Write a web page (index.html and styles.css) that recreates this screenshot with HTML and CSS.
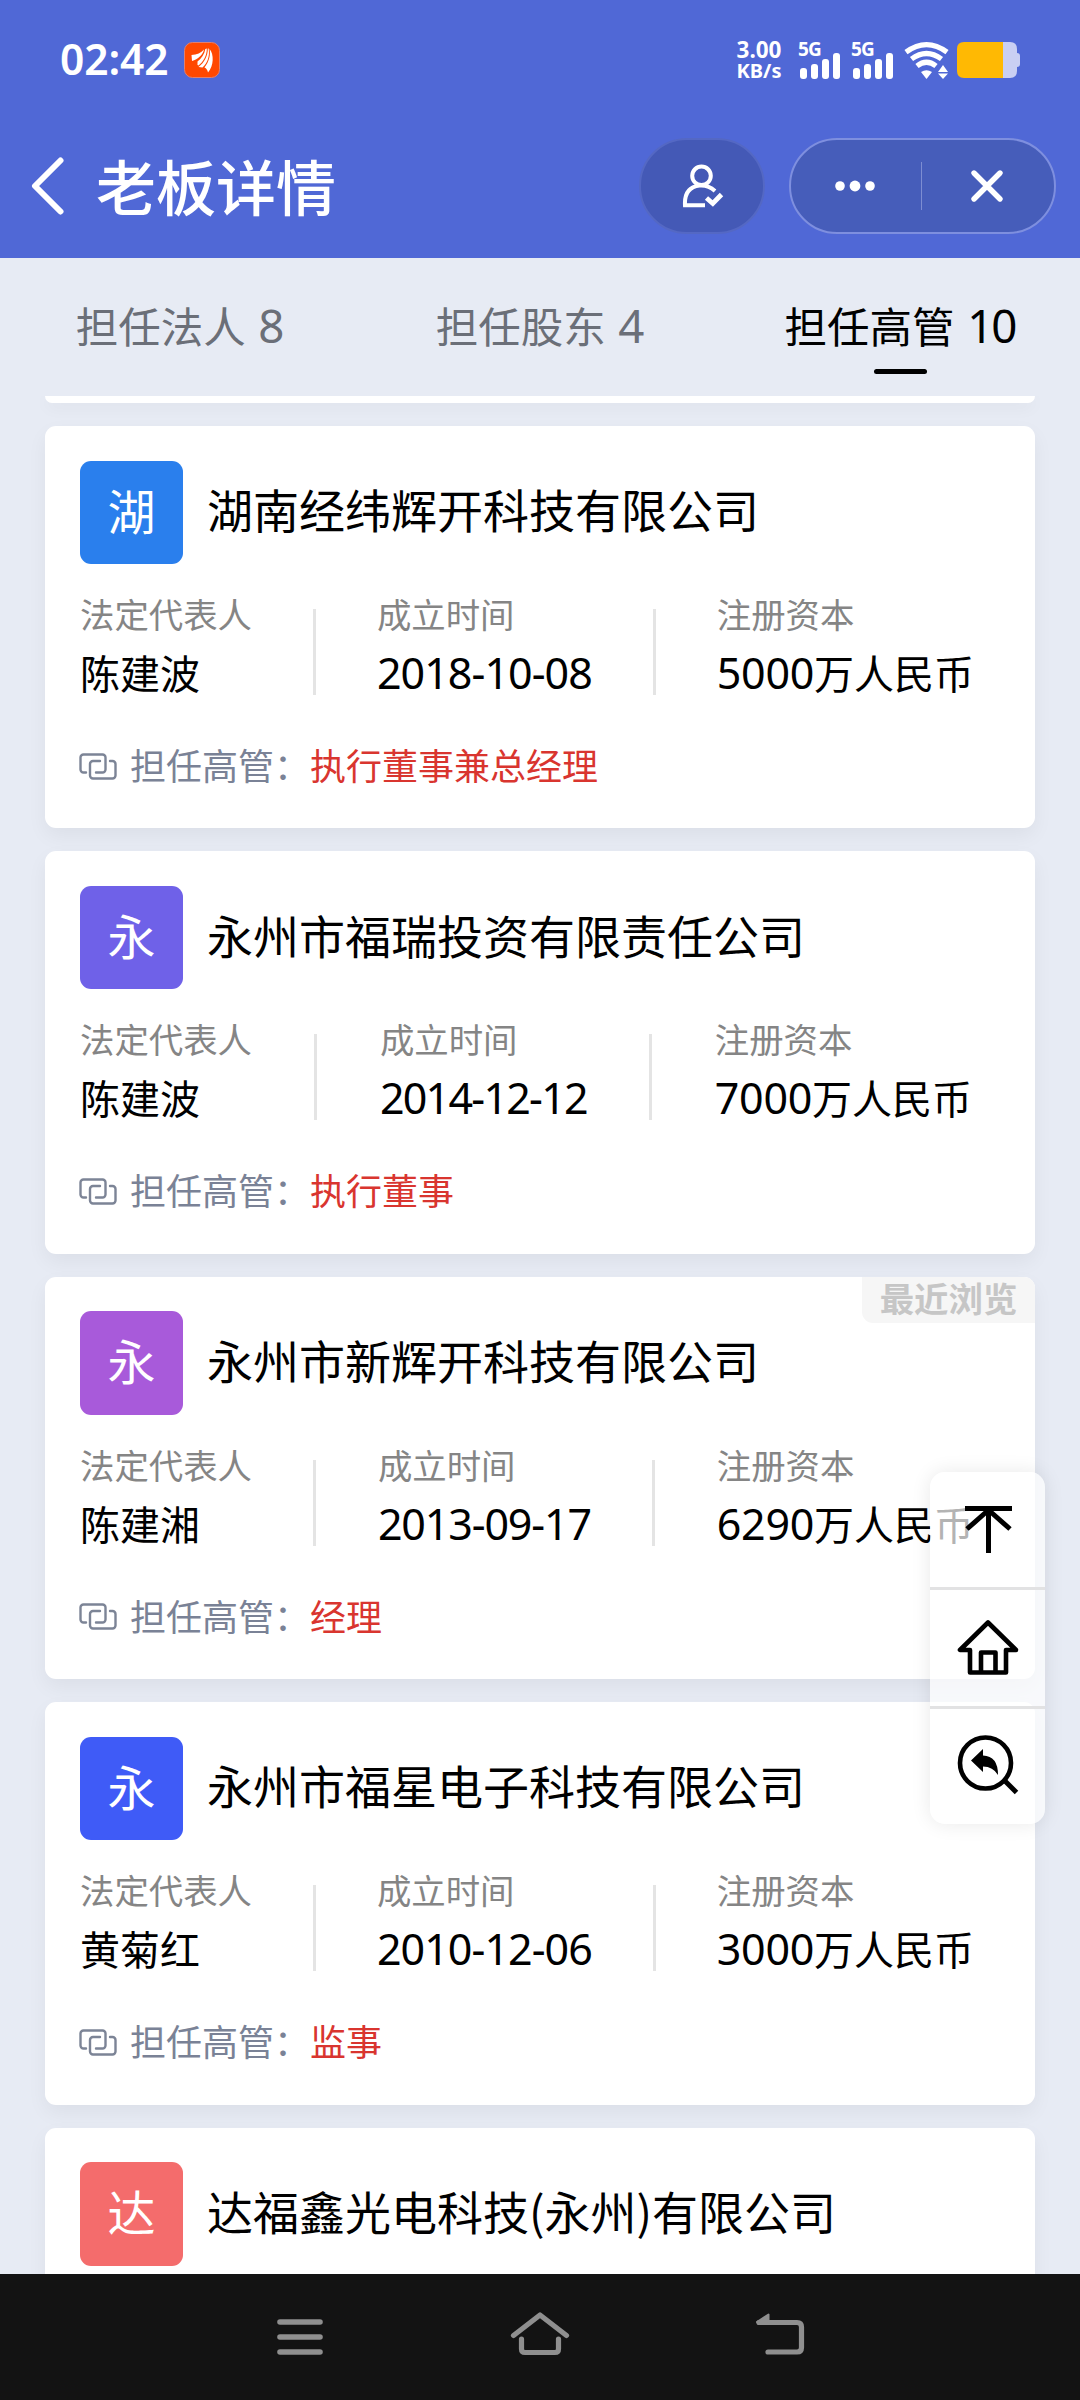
FILE: index.html
```html
<!DOCTYPE html>
<html lang="zh-CN">
<head>
<meta charset="utf-8">
<title>老板详情</title>
<link rel="stylesheet" href="styles.css">
</head>
<body>
<svg class="defs" width="0" height="0">
  <symbol id="link" viewBox="0 0 38 27">
    <g fill="none" stroke="#7c8496" stroke-width="2.4" stroke-linecap="round" stroke-linejoin="round">
      <path d="M7 19.500H4.500a3 3 0 0 1-3-3V4.500a3 3 0 0 1 3-3H23.500a3 3 0 0 1 3 3V16.500a3 3 0 0 1-3 3H17"/>
      <path d="M21 8H14a3 3 0 0 0-3 3V22.500a3 3 0 0 0 3 3H33.500a3 3 0 0 0 3-3V11a3 3 0 0 0-3-3H31"/>
    </g>
  </symbol>
  <symbol id="signal" viewBox="0 0 40 26">
    <g fill="#fff"><rect x="0" y="15" width="7" height="11" rx="3"/><rect x="11" y="11" width="7" height="15" rx="3"/><rect x="22" y="6" width="7" height="20" rx="3"/><rect x="33" y="0" width="7" height="26" rx="3"/></g>
  </symbol>
</svg>

<header class="header">
  <div class="status">
    <span class="clock">02:42</span>
    <svg class="app" width="36" height="36" viewBox="0 0 36 36"><rect x=".5" y=".5" width="35" height="35" rx="8" fill="#ff4800" stroke="#e08070"/><g fill="#fff"><path d="M7.500 13C13 12.500 17 11 20 7.500C19 13 14 17 8 19Z"/><path d="M13.500 19.500C17.500 16.500 20.500 12 21.300 7L22.800 6.500C23 14 19 20 14.500 23.500L13.500 23Z"/><path d="M14.500 25C20 21 24 14 23.800 6.500L24.600 6.500C26 14 23.500 21 18.500 25.500Z"/><path d="M25.600 7C30 12 30 24 24 30.500C23.500 28 22.500 26.500 20.500 25.500C25.500 19 26.500 13 25.600 7Z"/></g></svg>
    <div class="speed"><span>3.00</span><span>KB/s</span></div>
    <div class="cell"><span>5G</span><svg width="40" height="26"><use href="#signal"/></svg></div>
    <div class="cell"><span>5G</span><svg width="40" height="26"><use href="#signal"/></svg></div>
    <svg class="wifi" width="46" height="38" viewBox="0 0 46 38"><g fill="none" stroke="#fff" stroke-width="5.200"><path d="M2 10.200Q22.500-4.800 43 10.200"/><path d="M7.500 17Q22.500 6 37.500 17"/><path d="M13 24Q22.500 16.500 32 24"/></g><g fill="#fff"><path d="M17 30Q22.500 26.500 28 30L22.500 37Z"/><path d="M34 30L39 23L44 30ZM34 31.500H44L39 37Z"/></g></svg>
    <svg class="battery" width="63" height="36" viewBox="0 0 63 36"><path d="M46 0H53Q60 0 60 7V11Q63 11 63 14V22Q63 25 60 25V29Q60 36 53 36H46Z" fill="#c9cff3"/><path d="M46 0H7Q0 0 0 7V29Q0 36 7 36H46Z" fill="#ffb903"/></svg>
  </div>
  <div class="bar">
    <svg class="back" width="34" height="58" viewBox="0 0 34 58"><path d="M29.500 3.500L4 29L29.500 54.500" fill="none" stroke="#fff" stroke-width="6" stroke-linecap="round" stroke-linejoin="round"/></svg>
    <h1 class="heading">老板详情</h1>
    <div class="user"><svg width="42" height="44" viewBox="0 0 42 44" fill="none" stroke="#fff" stroke-width="4"><circle cx="19.500" cy="11.800" r="9.300"/><path d="M23 41.300H3Q2 23.500 17.500 21.600Q26 20.800 33 27"/><path d="M24.500 34L30.800 39.500L39.500 30.500" stroke-width="4.800"/></svg></div>
    <div class="capsule">
      <svg width="42" height="12" viewBox="0 0 42 12" fill="#fff"><circle cx="6" cy="6" r="4.800"/><circle cx="21" cy="6" r="5.400"/><circle cx="36" cy="6" r="4.800"/></svg>
      <i class="split"></i>
      <svg width="34" height="34" viewBox="0 0 34 34"><path d="M4 4L30 30M30 4L4 30" stroke="#fff" stroke-width="5.400" stroke-linecap="round"/></svg>
    </div>
  </div>
</header>

<nav class="tabs">
  <div class="tab">担任法人 <span class="num">8</span></div>
  <div class="tab">担任股东 <span class="num">4</span></div>
  <div class="tab active">担任高管 <span class="num">10</span></div>
</nav>

<main class="list">
  <article class="card stub"></article>

  <article class="card">
    <div class="title"><span class="avatar a1">湖</span><h2>湖南经纬辉开科技有限公司</h2></div>
    <div class="facts">
      <div class="fact"><span>法定代表人</span><b>陈建波</b></div><i></i>
      <div class="fact"><span>成立时间</span><b class="num">2018-10-08</b></div><i></i>
      <div class="fact"><span>注册资本</span><b><span class="num">5000</span>万人民币</b></div>
    </div>
    <div class="role"><svg width="38" height="27"><use href="#link"/></svg><span>担任高管：</span><em>执行董事兼总经理</em></div>
  </article>

  <article class="card">
    <div class="title"><span class="avatar a2">永</span><h2>永州市福瑞投资有限责任公司</h2></div>
    <div class="facts narrow">
      <div class="fact"><span>法定代表人</span><b>陈建波</b></div><i></i>
      <div class="fact"><span>成立时间</span><b class="num tight">2014-12-12</b></div><i></i>
      <div class="fact"><span>注册资本</span><b><span class="num">7000</span>万人民币</b></div>
    </div>
    <div class="role"><svg width="38" height="27"><use href="#link"/></svg><span>担任高管：</span><em>执行董事</em></div>
  </article>

  <article class="card">
    <div class="recent">最近浏览</div>
    <div class="title"><span class="avatar a3">永</span><h2>永州市新辉开科技有限公司</h2></div>
    <div class="facts">
      <div class="fact"><span>法定代表人</span><b>陈建湘</b></div><i></i>
      <div class="fact"><span>成立时间</span><b class="num snug">2013-09-17</b></div><i></i>
      <div class="fact"><span>注册资本</span><b><span class="num">6290</span>万人民币</b></div>
    </div>
    <div class="role"><svg width="38" height="27"><use href="#link"/></svg><span>担任高管：</span><em>经理</em></div>
  </article>

  <article class="card">
    <div class="title"><span class="avatar a4">永</span><h2>永州市福星电子科技有限公司</h2></div>
    <div class="facts">
      <div class="fact"><span>法定代表人</span><b>黄菊红</b></div><i></i>
      <div class="fact"><span>成立时间</span><b class="num">2010-12-06</b></div><i></i>
      <div class="fact"><span>注册资本</span><b><span class="num">3000</span>万人民币</b></div>
    </div>
    <div class="role"><svg width="38" height="27"><use href="#link"/></svg><span>担任高管：</span><em>监事</em></div>
  </article>

  <article class="card">
    <div class="title"><span class="avatar a5">达</span><h2>达福鑫光电科技(永州)有限公司</h2></div>
  </article>
</main>

<aside class="tools">
  <div class="tool"><svg width="64" height="64" viewBox="0 0 64 64" fill="none" stroke="#000" stroke-width="5"><path d="M9 10.500H56M32.500 10.500V55M32.500 12L11 31M32.500 12L54 31"/></svg></div>
  <div class="tool"><svg width="64" height="64" viewBox="0 0 64 64" fill="none" stroke="#000" stroke-width="4.600" stroke-linejoin="round"><path d="M32 6.500L4 34H14V56.500H50V34H60ZM25 56V36.500H39.500V56"/></svg></div>
  <div class="tool"><svg width="64" height="64" viewBox="0 0 64 64"><circle cx="29.500" cy="29" r="25.500" fill="none" stroke="#000" stroke-width="4.600"/><path d="M48 46L60.500 58.500" stroke="#000" stroke-width="5"/><path d="M15 26.500L27 15V21.500Q42 22 42 41Q37 32.500 27 32.500V38Z"/></svg></div>
</aside>

<footer class="sysnav">
  <svg width="60" height="60" viewBox="0 0 60 60" stroke="#8f8f8f" stroke-width="5.600" stroke-linecap="round"><path d="M10 18H50M10 33H50M10 48H50"/></svg>
  <svg width="60" height="60" viewBox="0 0 60 60" fill="none" stroke="#8f8f8f" stroke-width="5.200" stroke-linecap="round" stroke-linejoin="round"><path d="M3.500 31.500L30 11L56.500 31.500M11.500 35V45Q11.500 48.500 15 48.500H45Q48.500 48.500 48.500 45V35"/></svg>
  <svg width="60" height="60" viewBox="0 0 60 60" fill="none" stroke="#8f8f8f" stroke-width="5.200" stroke-linecap="round" stroke-linejoin="round"><path d="M9 18.500H47Q51.500 18.500 51.500 23V43.500Q51.500 48 47 48H18"/><path d="M7 18L18.500 10.500V19.500H9Z" fill="#8f8f8f" stroke-width="2"/></svg>
</footer>
</body>
</html>
```
FILE: styles.css
```css
* { box-sizing: border-box; }
body {
  margin: 0;
  width: 1080px;
  height: 2400px;
  position: relative;
  display: flex;
  flex-direction: column;
  overflow: hidden;
  background: #e7ebf4;
  color: #000;
  font-family: "Noto Sans CJK SC", sans-serif;
}
svg { display: block; flex: none; }
h1, h2 { margin: 0; font-weight: 400; white-space: nowrap; }
b { font-weight: 400; }
em { font-style: normal; }
.defs { position: absolute; }
.num { font-family: "Noto Sans", "Noto Sans CJK SC", sans-serif; font-size: 1.075em; }

.header { flex: none; height: 258px; background: #5068d6; color: #fff; }
.status { height: 120px; padding: 42px 60px 0 60px; display: flex; align-items: flex-start; }
.clock { width: 124px; font: 600 42.500px/34px "Noto Sans", sans-serif; letter-spacing: -.1px; }
.speed { width: 50px; margin: 0 14px 0 auto; display: flex; flex-direction: column; align-items: center; font: 700 22px/20px "Noto Sans", sans-serif; }
.speed span:first-child { line-height: 16px; font-size: 22.500px; }
.speed span:last-child { font-size: 20px; line-height: 26px; }
.cell { width: 43px; height: 36px; display: flex; flex-direction: column; margin-right: 10px; font: 700 19px/14px "Noto Sans", sans-serif; }
.cell svg { margin: -3px 0 0 2px; }
.cell span { height: 14px; letter-spacing: -.8px; }
.wifi { margin: 0 7px 0 0; }
.bar { height: 138px; padding: 18px 24px 0 31px; display: flex; align-items: flex-start; }
.back { margin-top: 19px; }
.heading { margin-left: 31px; font-size: 60px; line-height: 94px; font-weight: 500; }
.user, .capsule { height: 96px; border-radius: 48px; display: flex; align-items: center; }
.user { width: 126px; margin-left: auto; margin-right: 24px; padding-left: 1px; justify-content: center; background: #4459b6; border: 2px solid #5468c4; }
.capsule { width: 267px; background: #465dba; border: 2px solid #7e8fdf; padding: 0 50px 0 43px; justify-content: space-between; }
.split { width: 1px; height: 48px; background: #7d8dd2; margin-right: 4px; }

.tabs { flex: none; height: 138px; display: flex; }
.tab { flex: 1; text-align: center; font-size: 42.500px; line-height: 62px; padding-top: 35.500px; color: #6b6f78; white-space: pre; }
.tab .num { margin-left: 3px; line-height: 1; }
.tab.active { color: #000; }
.tab.active .num { letter-spacing: -2px; }
.tab.active::after { content: ""; display: block; width: 53px; height: 5px; border-radius: 3px; background: #000; margin: 13px auto 0; }

.list { flex: none; height: 1878px; overflow: hidden; display: flex; flex-direction: column; gap: 23px; padding: 0 45px; }
.card { flex: none; position: relative; height: 402.400px; padding: 34.500px 35px; border-radius: 11px; background: #fff; box-shadow: 0 8px 20px rgba(0, 0, 0, .05); }
.card.stub { height: 7px; padding: 0; border-radius: 0 0 11px 11px; box-shadow: 0 4px 16px rgba(0, 0, 0, .06); }
.title { display: flex; align-items: center; gap: 24px; height: 103.500px; }
.title h2 { font-size: 46px; line-height: 60px; padding-bottom: 8px; }
.avatar { width: 103px; height: 103.500px; border-radius: 11px; text-align: center; color: #fff; font-size: 48px; line-height: 97px; }
.a1 { background: #2a7fed; }
.a2 { background: #6f61e8; }
.a3 { background: #a85ada; }
.a4 { background: #3f5bf7; }
.a5 { background: #f46c6c; }
.facts { width: 894px; margin-top: 27px; display: flex; justify-content: space-between; align-items: flex-start; }
.facts.narrow { width: 892px; }
.facts i { width: 3px; height: 86px; margin-top: 18px; background: #e4e4e4; }
.fact { display: flex; flex-direction: column; white-space: nowrap; }
.fact > span { font-size: 34.400px; line-height: 44px; color: #858585; }
.fact > b { font-size: 40px; line-height: 56px; height: 56px; margin-top: 9px; }
.fact > b.num { font-size: 43px; letter-spacing: -.95px; padding-top: 1px; }
.fact > b.tight { letter-spacing: -1.750px; }
.fact > b.snug { letter-spacing: -1.150px; }
.fact b .num { font-size: 43px; line-height: 1; letter-spacing: -.3px; }
.role { display: flex; align-items: center; height: 50px; margin-top: 41px; font-size: 36px; color: #7a8296; line-height: 50px; }
.role span, .role em { padding-bottom: 4px; }
.role svg { margin: 0 13px 0 -1px; }
.role em { color: #d9352f; }
.recent { position: absolute; top: 0; right: 0; width: 173px; height: 46px; border-radius: 0 11px 0 11px; background: #f6f6f6; color: #c6c6c6; font-weight: 700; font-size: 34.400px; line-height: 40px; text-align: center; }

.tools { position: absolute; left: 930px; top: 1472px; width: 115px; height: 352px; border-radius: 15px; background: rgba(255, 255, 255, .7); box-shadow: 0 0 20px rgba(0, 0, 0, .09); display: flex; flex-direction: column; }
.tool { flex: 1; display: flex; align-items: center; justify-content: center; }
.tool + .tool { border-top: 3px solid #e2e2e3; }

.sysnav { flex: none; height: 126px; background: #131313; display: flex; justify-content: space-between; padding: 30px 270px 0; }
```
